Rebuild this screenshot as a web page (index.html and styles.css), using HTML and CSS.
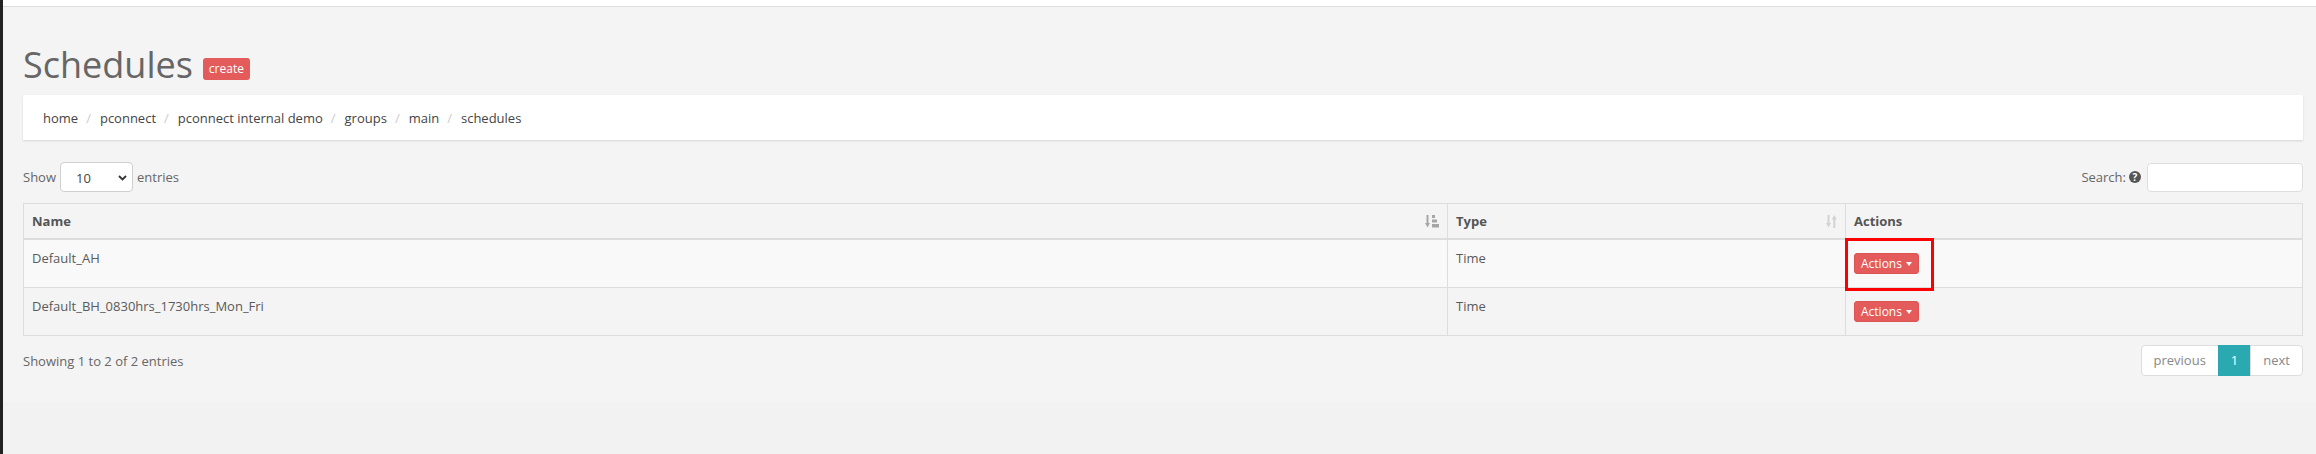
FILE: index.html
```html
<!DOCTYPE html>
<html lang="en">
<head>
<meta charset="utf-8">
<title>Schedules</title>
<link rel="stylesheet" href="styles.css">
</head>
<body>
<div class="app">
  <div class="edge"></div>
  <div class="main">
    <div class="topbar"></div>
    <div class="content">
      <div class="title-row">
        <h1 class="title">Schedules</h1>
        <span class="badge">create</span>
      </div>
      <ol class="breadcrumb">
        <li>home</li>
        <li>pconnect</li>
        <li>pconnect internal demo</li>
        <li>groups</li>
        <li>main</li>
        <li>schedules</li>
      </ol>
      <div class="controls">
        <div class="length">
          <span>Show</span>
          <div class="select">
            <span class="select-val">10</span>
            <svg class="chev" width="9" height="6" viewBox="0 0 9 6"><path d="M1 1 L4.5 4.5 L8 1" fill="none" stroke="#333" stroke-width="1.8"/></svg>
          </div>
          <span>entries</span>
        </div>
        <div class="search">
          <span>Search:</span>
          <span class="help">?</span>
          <div class="input"></div>
        </div>
      </div>
      <div class="table-wrap">
        <table class="grid">
          <colgroup>
            <col class="c-name">
            <col class="c-type">
            <col class="c-actions">
          </colgroup>
          <thead>
            <tr>
              <th><div class="th-in"><span>Name</span>
                <svg class="sort-icon" width="14" height="13" viewBox="0 0 14 13"><rect x="1.5" y="0" width="2" height="9" fill="#a6a6a6"/><polygon points="0,8 5,8 2.5,12.5" fill="#a6a6a6"/><rect x="7" y="0" width="3" height="3" fill="#a6a6a6"/><rect x="7" y="4.5" width="5" height="3" fill="#a6a6a6"/><rect x="7" y="9" width="7" height="3.5" fill="#a6a6a6"/></svg>
              </div></th>
              <th><div class="th-in"><span>Type</span>
                <svg class="sort-icon" width="11" height="13" viewBox="0 0 11 13"><rect x="1.5" y="0" width="2" height="9" fill="#d2d2d2"/><polygon points="0,8 5,8 2.5,12.5" fill="#d2d2d2"/><polygon points="5.8,4.5 10.8,4.5 8.3,0" fill="#d2d2d2"/><rect x="7.3" y="4" width="2" height="9" fill="#d2d2d2"/></svg>
              </div></th>
              <th>Actions</th>
            </tr>
          </thead>
          <tbody>
            <tr>
              <td>Default_AH</td>
              <td>Time</td>
              <td><div class="act-wrap"><span class="btn">Actions<span class="caret"></span></span></div></td>
            </tr>
            <tr>
              <td>Default_BH_0830hrs_1730hrs_Mon_Fri</td>
              <td>Time</td>
              <td><div class="act-wrap"><span class="btn">Actions<span class="caret"></span></span></div></td>
            </tr>
          </tbody>
        </table>
        <div class="highlight"></div>
      </div>
      <div class="footer-row">
        <div class="info">Showing 1 to 2 of 2 entries</div>
        <ul class="pagination">
          <li class="pg-first">previous</li>
          <li class="pg-active">1</li>
          <li class="pg-last">next</li>
        </ul>
      </div>
    </div>
    <div class="bottom"></div>
  </div>
</div>
</body>
</html>
```
FILE: styles.css
```css
html, body {
  margin: 0;
  padding: 0;
}
body {
  background: #f2f2f2;
  font-family: "Open Sans", "Noto Sans", sans-serif;
  font-size: 13px;
  color: #555;
  overflow: hidden;
}
.app {
  display: flex;
  height: 454px;
}
.edge {
  width: 3px;
  flex: none;
  background: #222;
}
.main {
  flex: 1;
  display: flex;
  flex-direction: column;
  min-width: 0;
}
.topbar {
  height: 6px;
  flex: none;
  background: #fff;
  border-bottom: 1px solid #dcdcdc;
}
.content {
  flex: none;
  background: #f4f4f4;
  padding: 38px 13px 26px 20px;
}
.bottom {
  flex: 1;
}
.title-row {
  display: flex;
  align-items: flex-start;
  height: 40px;
}
.title {
  margin: 0;
  font-size: 36px;
  font-weight: 400;
  line-height: 40px;
  color: #666;
}
.badge {
  margin-left: 10px;
  margin-top: 13px;
  height: 22px;
  line-height: 22px;
  padding: 0 6px;
  font-size: 12px;
  color: #fff;
  background: #e35b5a;
  border-radius: 3px;
}
.breadcrumb {
  list-style: none;
  margin: 10px 0 0;
  padding: 13px 20px 12px;
  background: #fff;
  display: flex;
  line-height: 20px;
  color: #444;
  box-shadow: 0 1px 2px rgba(0, 0, 0, 0.13);
}
.breadcrumb li + li::before {
  content: "/";
  color: #ccc;
  padding: 0 9px 0 8px;
}
.controls {
  margin-top: 22px;
  height: 30px;
  display: flex;
  justify-content: space-between;
  align-items: center;
  color: #666;
}
.length {
  display: flex;
  align-items: center;
}
.select {
  width: 73px;
  height: 30px;
  box-sizing: border-box;
  margin: 0 4px;
  padding: 2px 5px 0 15px;
  display: flex;
  align-items: center;
  background: #fff;
  border: 1px solid #cfcfcf;
  border-radius: 4px;
  color: #444;
}
.chev {
  margin-left: auto;
}
.search {
  display: flex;
  align-items: center;
}
.help {
  width: 12px;
  height: 12px;
  margin-left: 3px;
  border-radius: 50%;
  background: #555;
  color: #fff;
  font-size: 10px;
  font-weight: 700;
  line-height: 12px;
  text-align: center;
}
.input {
  width: 156px;
  height: 29px;
  box-sizing: border-box;
  margin-left: 6px;
  background: #fff;
  border: 1px solid #dedede;
  border-radius: 4px;
}
.table-wrap {
  position: relative;
  margin-top: 11px;
}
.grid {
  width: 100%;
  border-collapse: collapse;
  table-layout: fixed;
}
.c-name {
  width: 1424px;
}
.c-type {
  width: 398px;
}
.grid th,
.grid td {
  border: 1px solid #ddd;
  padding: 8px;
  text-align: left;
  vertical-align: top;
}
.grid th {
  font-weight: 700;
  line-height: 18px;
  border-bottom-width: 2px;
  color: #555;
}
.grid td {
  line-height: 20px;
  color: #5a5a5a;
}
.grid tbody tr:nth-child(odd) td {
  background: #f9f9f9;
}
.th-in {
  display: flex;
  justify-content: space-between;
  align-items: center;
}
.act-wrap {
  display: flex;
  padding: 5px 0;
}
.btn {
  display: inline-flex;
  align-items: center;
  height: 21px;
  box-sizing: border-box;
  padding: 0 6px;
  font-size: 12px;
  line-height: 19px;
  color: #fff;
  background: #e35b5a;
  border: 1px solid #dc5352;
  border-radius: 3px;
}
.caret {
  width: 0;
  height: 0;
  margin-left: 4px;
  border-top: 4px solid #fff;
  border-left: 3px solid transparent;
  border-right: 3px solid transparent;
}
.highlight {
  position: absolute;
  left: 1822px;
  top: 35px;
  width: 89px;
  height: 53px;
  box-sizing: border-box;
  border: 3px solid #f00;
}
.footer-row {
  margin-top: 9px;
  height: 31px;
  display: flex;
  justify-content: space-between;
  align-items: center;
}
.info {
  color: #666;
}
.pagination {
  list-style: none;
  margin: 0;
  padding: 0;
  display: flex;
}
.pagination li {
  padding: 6px 12px;
  line-height: 17px;
  background: #fff;
  color: #888;
  border: 1px solid #ddd;
  margin-left: -1px;
}
.pagination .pg-first {
  margin-left: 0;
  border-radius: 4px 0 0 4px;
}
.pagination .pg-last {
  border-radius: 0 4px 4px 0;
}
.pagination .pg-active {
  background: #2aa9b0;
  border-color: #2aa9b0;
  color: #fff;
}
```
